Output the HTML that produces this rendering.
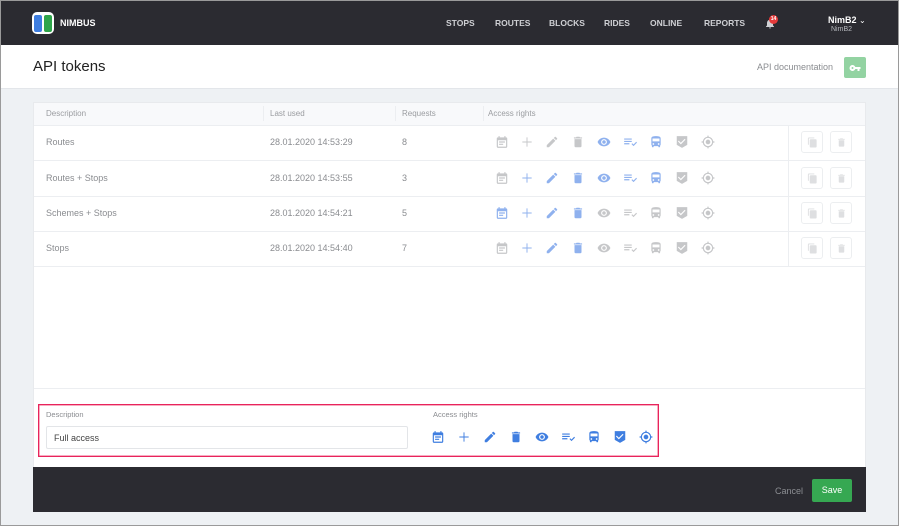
<!DOCTYPE html>
<html><head><meta charset="utf-8"><style>
*{box-sizing:border-box;margin:0;padding:0}
html,body{width:899px;height:526px;background:#eef1f4;font-family:"Liberation Sans",sans-serif;position:relative;overflow:hidden}
.abs{position:absolute}
.frame{left:0;top:0;width:899px;height:526px;border:1px solid #9a9a9a;pointer-events:none;z-index:9}
.top{left:0;top:0;width:899px;height:45px;background:#2b2b31}
.nav{top:18px;font-size:8.5px;font-weight:bold;color:#cfd0d4}
.title{left:0;top:45px;width:899px;height:44px;background:#fff;border-bottom:1px solid #e3e6ea}
.card{left:33px;top:102px;width:833px;height:366px;background:#fff;border:1px solid #e8eaed}
.th{font-size:8px;color:#9a9ca0;top:109px}
.td{font-size:9px;color:#8a8c90}
.hl{height:1px;background:#eceef1;left:34px;width:831px}
svg.i{position:absolute;width:14px;height:14px}
.g{fill:#c6c7c9}.b{fill:#8fb1ee}.B{fill:#3f7ee0}
.btn{position:absolute;width:22px;height:22px;border:1px solid #eceef0;border-radius:3px}
.btn svg{position:absolute;left:5px;top:5px;width:11px;height:11px;fill:#dedfe1}
</style></head><body>
<svg width="0" height="0" style="position:absolute"><defs>
<symbol id="cal" viewBox="0 0 24 24"><path d="M19 4h-1V2h-2v2H8V2H6v2H5a2 2 0 0 0-2 2v14a2 2 0 0 0 2 2h14a2 2 0 0 0 2-2V6a2 2 0 0 0-2-2zm0 16H5V9h14zM7 11h10v2H7zm0 4h7v2H7z"/></symbol>
<symbol id="plus" viewBox="0 0 24 24"><path d="M20 12.8h-7.2V20h-1.6v-7.2H4v-1.6h7.2V4h1.6v7.2H20z"/></symbol>
<symbol id="pen" viewBox="0 0 24 24"><path d="M3 17.25V21h3.75L17.81 9.94l-3.75-3.75zM20.71 7.04a1 1 0 0 0 0-1.41l-2.34-2.34a1 1 0 0 0-1.41 0l-1.830 1.83 3.75 3.75z"/></symbol>
<symbol id="del" viewBox="0 0 24 24"><path d="M6 19a2 2 0 0 0 2 2h8a2 2 0 0 0 2-2V7H6zM19 4h-3.5l-1-1h-5l-1 1H5v2h14z"/></symbol>
<symbol id="eye" viewBox="0 0 24 24"><path d="M12 4.5C7 4.5 2.73 7.61 1 12c1.730 4.39 6 7.5 11 7.5s9.27-3.11 11-7.5c-1.73-4.39-6-7.5-11-7.5zM12 17a5 5 0 1 1 0-10 5 5 0 0 1 0 10zm0-8a3 3 0 1 0 0 6 3 3 0 0 0 0-6z"/></symbol>
<symbol id="lst" viewBox="0 0 24 24"><path d="M2 6h13v2H2zm0 4h13v2H2zm0 4h9v2H2zm12.5 1.5l1.4-1.4 2.1 2.1 4.6-4.6 1.4 1.4-6 6z"/></symbol>
<symbol id="bus" viewBox="0 0 24 24"><path d="M4 16c0 .88.39 1.67 1 2.22V20a1 1 0 0 0 1 1h1a1 1 0 0 0 1-1v-1h8v1a1 1 0 0 0 1 1h1a1 1 0 0 0 1-1v-1.78c.61-.55 1-1.34 1-2.22V6c0-3.5-3.58-4-8-4s-8 .5-8 4zm3.5 1a1.5 1.5 0 1 1 0-3 1.5 1.5 0 0 1 0 3zm9 0a1.5 1.5 0 1 1 0-3 1.5 1.5 0 0 1 0 3zm1.5-6H6V6h12z"/></symbol>
<symbol id="shd" viewBox="0 0 24 24"><path d="M3 2h18v15l-9 5-9-5zm7 14l8-8-1.4-1.4-6.6 6.6-3.6-3.6L5 11z"/></symbol>
<symbol id="gps" viewBox="0 0 24 24"><path d="M12 8a4 4 0 1 0 0 8 4 4 0 0 0 0-8zm8.94 3A8.99 8.99 0 0 0 13 3.06V1h-2v2.06A8.99 8.99 0 0 0 3.06 11H1v2h2.06A8.99 8.99 0 0 0 11 20.94V23h2v-2.06A8.99 8.99 0 0 0 20.94 13H23v-2zM12 19a7 7 0 1 1 0-14 7 7 0 0 1 0 14z"/></symbol>
<symbol id="cpy" viewBox="0 0 24 24"><path d="M16 1H4a2 2 0 0 0-2 2v14h2V3h12zm3 4H8a2 2 0 0 0-2 2v14a2 2 0 0 0 2 2h11a2 2 0 0 0 2-2V7a2 2 0 0 0-2-2z"/></symbol>
</defs></svg>

<div class="abs top"></div>
<div class="abs" style="left:32px;top:12px;width:22px;height:22px;border-radius:5px;background:#fff;overflow:hidden">
 <div class="abs" style="left:2px;top:3px;width:8px;height:17px;background:#3f7ee0;border-radius:2px"></div>
 <div class="abs" style="left:12px;top:3px;width:8px;height:17px;background:#2fa54b;border-radius:2px"></div>
</div>
<div class="abs" style="left:60px;top:18px;font-size:9px;font-weight:bold;color:#fff">NIMBUS</div>
<div class="abs nav" style="left:446px">STOPS</div>
<div class="abs nav" style="left:495px">ROUTES</div>
<div class="abs nav" style="left:549px">BLOCKS</div>
<div class="abs nav" style="left:604px">RIDES</div>
<div class="abs nav" style="left:650px">ONLINE</div>
<div class="abs nav" style="left:704px">REPORTS</div>
<svg class="abs" style="left:764px;top:17px;width:12px;height:13px" viewBox="0 0 24 24"><path fill="#cfd0d4" d="M12 22a2 2 0 0 0 2-2h-4a2 2 0 0 0 2 2zm6-6V11c0-3.07-1.64-5.64-4.5-6.32V4a1.5 1.5 0 0 0-3 0v.68C7.63 5.36 6 7.92 6 11v5l-2 2v1h16v-1z"/></svg>
<div class="abs" style="left:769px;top:15px;width:9px;height:9px;border-radius:50%;background:#e53a3a;color:#fff;font-size:5px;text-align:center;line-height:9px;font-weight:bold">14</div>
<div class="abs" style="left:828px;top:15px;font-size:9px;font-weight:bold;color:#fff">NimB2</div>
<div class="abs" style="left:831px;top:26px;font-size:7px;color:#b9bbc0">NimB2</div>
<div class="abs" style="left:859px;top:16px;font-size:8px;color:#fff">&#8964;</div>

<div class="abs title"></div>
<div class="abs" style="left:33px;top:58px;font-size:15px;color:#222">API tokens</div>
<div class="abs" style="left:757px;top:62px;font-size:9px;color:#8a8c90">API documentation</div>
<div class="abs" style="left:844px;top:57px;width:22px;height:21px;background:#93d3a2;border-radius:2px"></div>
<svg class="abs" style="left:849px;top:62px;width:12px;height:12px" viewBox="0 0 24 24"><path fill="#fff" d="M12.65 10A6 6 0 1 0 12.65 14H17v4h4v-4h2v-4zM7 14a2 2 0 1 1 0-4 2 2 0 0 1 0 4z"/></svg>

<div class="abs card"></div>
<div class="abs" style="left:34px;top:103px;width:831px;height:22px;background:#f8f9fb"></div>
<div class="abs" style="left:263px;top:106px;width:1px;height:15px;background:#eceef1"></div>
<div class="abs" style="left:395px;top:106px;width:1px;height:15px;background:#eceef1"></div>
<div class="abs" style="left:483px;top:106px;width:1px;height:15px;background:#eceef1"></div>
<div class="abs th" style="left:46px">Description</div>
<div class="abs th" style="left:270px">Last used</div>
<div class="abs th" style="left:402px">Requests</div>
<div class="abs th" style="left:488px">Access rights</div>
<div class="abs hl" style="top:125px"></div>
<div class="abs hl" style="top:160px"></div>
<div class="abs hl" style="top:196px"></div>
<div class="abs hl" style="top:231px"></div>
<div class="abs hl" style="top:266px"></div>
<div class="abs" style="left:788px;top:125px;width:1px;height:141px;background:#eceef1"></div>
<div class="abs hl" style="top:388px"></div>

<div id="rows"></div>
<script>
var ids=["cal","plus","pen","del","eye","lst","bus","shd","gps"];
var xs=[495,520,545,571,597,623,649,675,701];
var rows=[
["Routes","28.01.2020 14:53:29","8",137,"ggggbbbgg"],
["Routes + Stops","28.01.2020 14:53:55","3",173,"gbbbbbbgg"],
["Schemes + Stops","28.01.2020 14:54:21","5",208,"bbbbggggg"],
["Stops","28.01.2020 14:54:40","7",243,"gbbbggggg"]];
var h="";
rows.forEach(function(r){
 var y=r[3];
 h+='<div class="abs td" style="left:46px;top:'+y+'px">'+r[0]+'</div>';
 h+='<div class="abs td" style="left:270px;top:'+y+'px">'+r[1]+'</div>';
 h+='<div class="abs td" style="left:402px;top:'+y+'px">'+r[2]+'</div>';
 for(var i=0;i<9;i++)h+='<svg class="i '+r[4][i]+'" style="left:'+xs[i]+'px;top:'+(y-2)+'px"><use href="#'+ids[i]+'"/></svg>';
 h+='<div class="btn" style="left:801px;top:'+(y-6)+'px"><svg><use href="#cpy"/></svg></div>';
 h+='<div class="btn" style="left:830px;top:'+(y-6)+'px"><svg><use href="#del"/></svg></div>';
});
var fx=[431,457,483,509,535,561,587,613,639];
for(var i=0;i<9;i++)h+='<svg class="i B" style="left:'+fx[i]+'px;top:430px"><use href="#'+ids[i]+'"/></svg>';
document.getElementById("rows").innerHTML=h;
</script>

<div class="abs" style="left:38px;top:404px;width:621px;height:53px;border:1px solid rgb(232,36,92);box-shadow:inset 0 0 0 0.5px rgb(240,90,130)"></div>
<div class="abs" style="left:46px;top:410px;font-size:7.5px;color:#8a8c90">Description</div>
<div class="abs" style="left:433px;top:410px;font-size:7.5px;color:#8a8c90">Access rights</div>
<div class="abs" style="left:46px;top:426px;width:362px;height:23px;border:1px solid #e3e5e8;border-radius:2px;font-size:9px;color:#444;padding:6px 0 0 7px">Full access</div>

<div class="abs" style="left:33px;top:467px;width:833px;height:45px;background:#2b2b31"></div>
<div class="abs" style="left:775px;top:486px;font-size:9px;color:#8c8e93">Cancel</div>
<div class="abs" style="left:812px;top:479px;width:40px;height:23px;background:#36a852;border-radius:2px;color:#fff;font-size:9px;text-align:center;line-height:23px">Save</div>
<div class="abs frame"></div>
</body></html>
